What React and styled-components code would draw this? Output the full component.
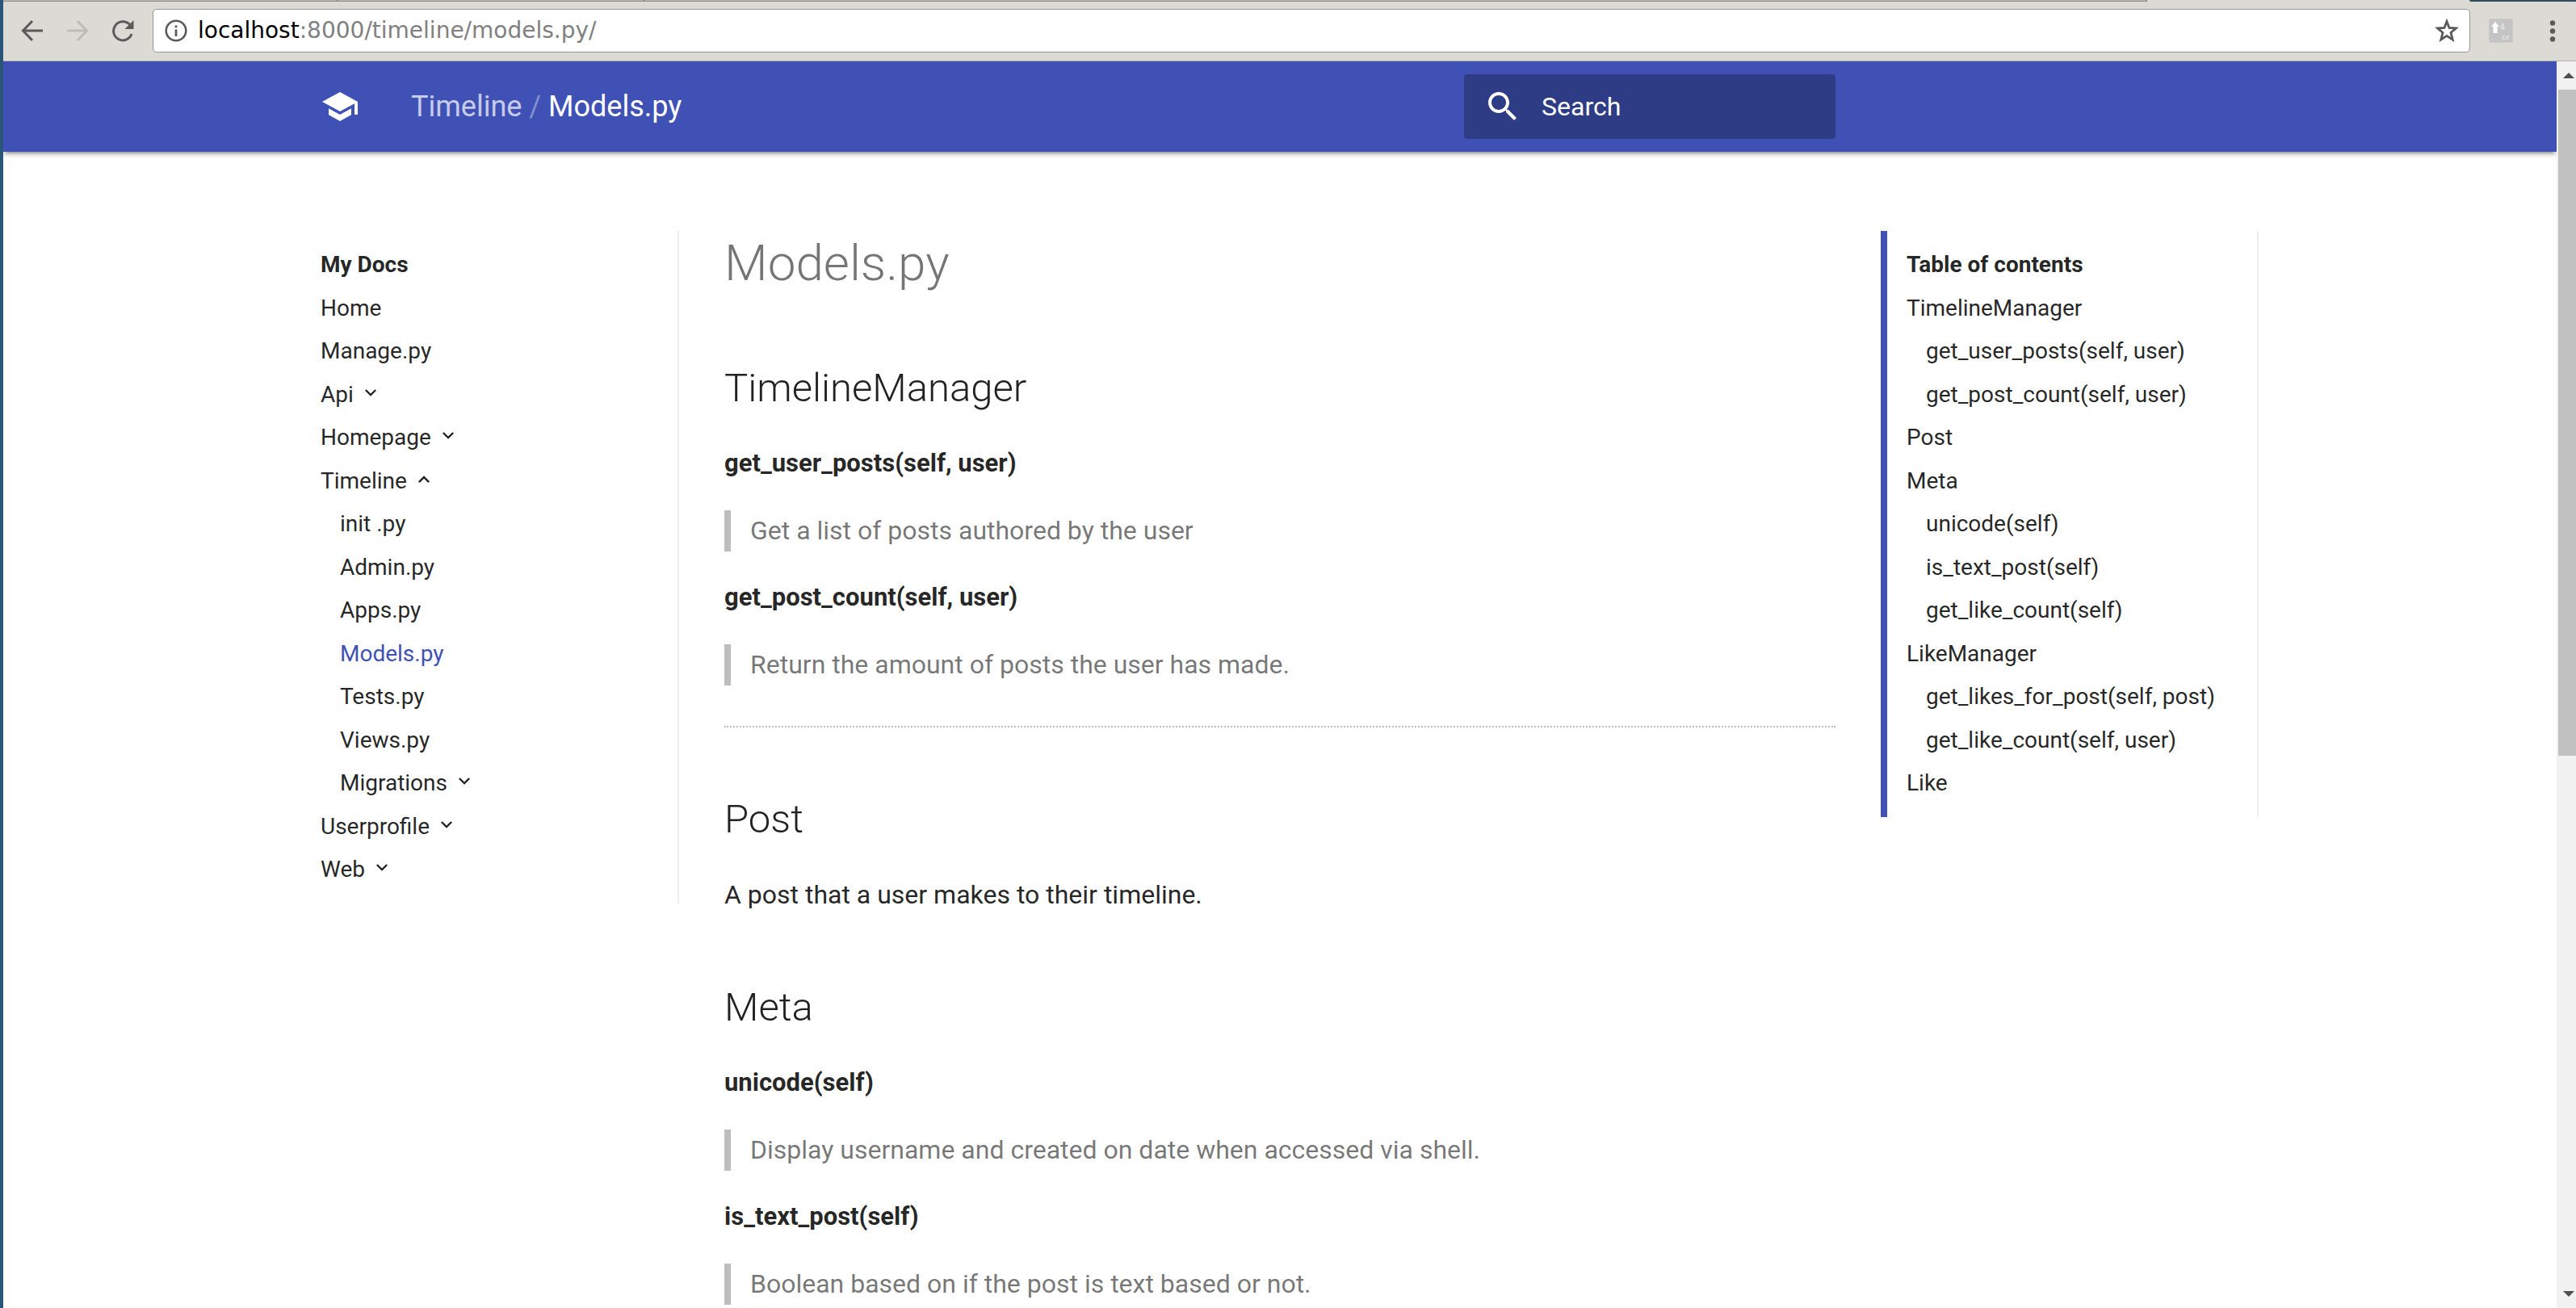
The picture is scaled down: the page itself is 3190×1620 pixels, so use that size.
import React from "react";
import styled, { createGlobalStyle } from "styled-components";

const INDIGO = "#3f51b5";

const GlobalStyle = createGlobalStyle`
  *, *::before, *::after { box-sizing: border-box; }
  body {
    margin: 0;
    background: #fff;
    color: rgba(0, 0, 0, 0.87);
    font-family: Roboto, "Liberation Sans", sans-serif;
    font-size: 32px;
  }
  ul { list-style: none; margin: 0; padding: 0; }
  a { color: inherit; text-decoration: none; }
`;

const Window = styled.div`
  display: flex;
  flex-direction: column;
  height: 100vh;
  overflow: hidden;
  border-left: 4px solid #2a5478;
`;

const TabStrip = styled.div`
  display: flex;
  flex: none;
  height: 3px;
  background: #dbdad4;
`;

const Tab = styled.div`
  flex: ${(p) => p.$grow};
  height: 2px;
  background: #bdbcb5;
  border-bottom: 1px solid #8b8a85;
  border-right: 2px solid #8b8a85;
`;

const ActiveTab = styled.div`
  flex: 400;
`;

const Desktop = styled.div`
  flex: 132;
  height: 2px;
  background: #34536b;
  border-bottom: 1px solid #26404f;
  border-bottom-left-radius: 2px;
`;

const Toolbar = styled.div`
  display: flex;
  flex: none;
  align-items: center;
  height: 73px;
  padding: 0 13px 2px 16px;
  background: #dbdad4;
  border-bottom: 1px solid #b1b0ab;
`;

const ToolButton = styled.button`
  display: flex;
  align-items: center;
  justify-content: center;
  width: 40px;
  height: 40px;
  margin-right: 16px;
  padding: 0;
  border: 0;
  background: none;
  color: ${(p) => (p.disabled ? "#bdbcb8" : "#5a5a5a")};
`;

const AddressBar = styled.div`
  display: flex;
  flex: 1;
  align-items: center;
  height: 54px;
  margin-left: 1px;
  padding: 0 12px 0 14px;
  background: #fff;
  border: 1px solid #969690;
  border-radius: 5px;
  color: #5a5a5a;
`;

const Url = styled.a`
  flex: 1;
  margin-left: 13px;
  font-family: "DejaVu Sans", sans-serif;
  font-size: 28px;
  line-height: 32px;
  color: #808080;
`;

const Host = styled.span`
  color: #000;
`;

const StarButton = styled(ToolButton)`
  width: 32px;
  margin: 0;
`;

const Extension = styled(ToolButton)`
  width: 32px;
  margin: 0 32px 0 22px;
`;

const MenuButton = styled(ToolButton)`
  width: 32px;
  margin: 0;
`;

const Viewport = styled.div`
  display: flex;
  flex: 1;
  min-height: 0;
`;

const Page = styled.div`
  flex: 1;
  min-width: 0;
  overflow: hidden;
`;

const Header = styled.header`
  background: ${INDIGO};
  color: #fff;
  box-shadow: 0 4px 4px rgba(0, 0, 0, 0.14), 0 2px 10px rgba(0, 0, 0, 0.12),
    0 6px 2px -4px rgba(0, 0, 0, 0.2);
`;

const HeaderInner = styled.div`
  display: flex;
  align-items: center;
  justify-content: space-between;
  max-width: 2440px;
  height: 112px;
  margin: 0 auto;
  padding: 0 532px 0 32px;
`;

const Brand = styled.div`
  display: flex;
  align-items: center;
  gap: 64px;
`;

const LogoLink = styled.a`
  display: flex;
`;

const Crumbs = styled.nav`
  font-size: 36px;
  line-height: 48px;
  white-space: pre;
`;

const Parent = styled.a`
  opacity: 0.7;
`;

const Slash = styled.span`
  opacity: 0.35;
`;

const SearchBox = styled.label`
  display: flex;
  align-items: center;
  gap: 24px;
  width: 460px;
  height: 80px;
  padding: 0 24px;
  background: rgba(0, 0, 0, 0.26);
  border-radius: 4px;
`;

const SearchInput = styled.input`
  flex: 1;
  min-width: 0;
  padding: 0;
  border: 0;
  outline: 0;
  background: none;
  color: #fff;
  font: inherit;
  &::placeholder { color: #fff; opacity: 1; }
`;

const Main = styled.main`
  display: grid;
  grid-template-columns: 444px minmax(0, 1fr) 468px;
  align-items: start;
  column-gap: 56px;
  max-width: 2440px;
  margin: 0 auto;
  padding: 98px 8px 0 32px;
`;

const Sidebar = styled.nav`
  padding: 24px 0;
  border-right: 2px solid #eee;
  font-size: 28px;
  line-height: 36px;
`;

const TocPanel = styled(Sidebar)`
  padding-left: 24px;
  border-left: 8px solid ${INDIGO};
`;

const Item = styled.li`
  padding-left: ${(p) => (p.$level ? 24 : 0)}px;
  font-weight: ${(p) => (p.$title ? 700 : 400)};
  &:nth-child(even) { padding-top: 18px; }
  &:nth-child(odd) { padding-top: 17px; }
  &:first-child { padding-top: 0; }
`;

const ItemLink = styled.a`
  display: flex;
  gap: 7px;
  color: ${(p) => (p.$active ? INDIGO : "inherit")};
`;

const Chevron = styled.svg`
  width: 28px;
  height: 28px;
  margin-top: 2px;
  fill: currentColor;
`;

const Title = styled.h1`
  margin: 0 0 80px;
  font-size: 62px;
  font-weight: 300;
  line-height: 80px;
  color: rgba(0, 0, 0, 0.54);
`;

const SectionTitle = styled.h2`
  margin: 79px 0 33px;
  font-size: 49px;
  font-weight: 300;
  line-height: 70px;
`;

const Method = styled.h3`
  margin: 34px 0 36px;
  font-size: 31px;
  font-weight: 700;
  line-height: 45px;
  ${SectionTitle} + & { margin-top: 35px; }
`;

const Text = styled.p`
  margin: 0;
  line-height: 51px;
`;

const Quote = styled.blockquote`
  margin: 0;
  padding-left: 24px;
  border-left: 8px solid rgba(0, 0, 0, 0.26);
  color: rgba(0, 0, 0, 0.54);
  line-height: 51px;
`;

const Rule = styled.hr`
  margin: 50px 0 0;
  border: 0;
  border-top: 2px dotted rgba(0, 0, 0, 0.26);
`;

const Scrollbar = styled.div`
  display: flex;
  flex: none;
  flex-direction: column;
  align-items: flex-end;
  width: 24px;
  background: #f1f1f1;
`;

const Arrow = styled.button`
  display: flex;
  flex: none;
  align-items: center;
  justify-content: center;
  width: 22px;
  height: 35px;
  padding: 0 0 0 4px;
  border: 0;
  background: none;
`;

const Track = styled.div`
  flex: 1;
  width: 22px;
`;

const Thumb = styled.div`
  height: 56%;
  background: #c1c1c1;
`;

const NAV = [
  { label: "Home" },
  { label: "Manage.py" },
  { label: "Api", chevron: "down" },
  { label: "Homepage", chevron: "down" },
  { label: "Timeline", chevron: "up" },
  { label: "init .py", level: 1 },
  { label: "Admin.py", level: 1 },
  { label: "Apps.py", level: 1 },
  { label: "Models.py", level: 1, active: true },
  { label: "Tests.py", level: 1 },
  { label: "Views.py", level: 1 },
  { label: "Migrations", level: 1, chevron: "down" },
  { label: "Userprofile", chevron: "down" },
  { label: "Web", chevron: "down" },
];

const TOC = [
  { label: "TimelineManager" },
  { label: "get_user_posts(self, user)", level: 1 },
  { label: "get_post_count(self, user)", level: 1 },
  { label: "Post" },
  { label: "Meta" },
  { label: "unicode(self)", level: 1 },
  { label: "is_text_post(self)", level: 1 },
  { label: "get_like_count(self)", level: 1 },
  { label: "LikeManager" },
  { label: "get_likes_for_post(self, post)", level: 1 },
  { label: "get_like_count(self, user)", level: 1 },
  { label: "Like" },
];

const CHEVRONS = {
  down: "M7.41 7.84L12 12.42l4.59-4.58L18 9.25l-6 6-6-6z",
  up: "M7.41 15.41L12 10.83l4.59 4.58L18 14l-6-6-6 6z",
};

function LinkList({ title, items }) {
  return (
    <ul>
      <Item $title>{title}</Item>
      {items.map((item, i) => (
        <Item key={i} $level={item.level}>
          <ItemLink href="#" $active={item.active}>
            {item.label}
            {item.chevron && (
              <Chevron viewBox="0 0 24 24" aria-hidden="true">
                <path d={CHEVRONS[item.chevron]} />
              </Chevron>
            )}
          </ItemLink>
        </Item>
      ))}
    </ul>
  );
}

function BrowserBar() {
  return (
    <Toolbar>
      <ToolButton aria-label="Back">
        <svg width="28" height="28" viewBox="0 0 28 28" fill="none" stroke="currentColor" strokeWidth="3">
          <path d="M27 14H3M14 2L2.500 14L14 26" />
        </svg>
      </ToolButton>
      <ToolButton aria-label="Forward" disabled>
        <svg width="28" height="28" viewBox="0 0 28 28" fill="none" stroke="currentColor" strokeWidth="3">
          <path d="M1 14H25M14 2L25.500 14L14 26" />
        </svg>
      </ToolButton>
      <ToolButton aria-label="Reload">
        <svg width="28" height="28" viewBox="0 0 28 28">
          <path d="M22.500 6.500A11.500 11.500 0 1 0 25 18" fill="none" stroke="currentColor" strokeWidth="3" />
          <path d="M27.500 1V12H16.500z" fill="currentColor" />
        </svg>
      </ToolButton>
      <AddressBar>
        <svg width="28" height="28" viewBox="0 0 28 28" fill="none" stroke="currentColor">
          <circle cx="14" cy="14" r="12.300" strokeWidth="2.600" />
          <path d="M14 12.500V21M14 7.500V10.300" strokeWidth="2.800" />
        </svg>
        <Url href="#">
          <Host>localhost</Host>:8000/timeline/models.py/
        </Url>
        <StarButton aria-label="Bookmark this page">
          <svg width="30" height="30" viewBox="0 0 30 30" fill="none" stroke="currentColor" strokeWidth="2.800">
            <path d="M15 3.500L18 11.500L26.500 12L20 17.500L22.200 26L15 21.300L7.800 26L10 17.500L3.500 12L12 11.500z" />
          </svg>
        </StarButton>
      </AddressBar>
      <Extension aria-label="Extension">
        <svg width="30" height="30" viewBox="0 0 30 30">
          <rect x="0.500" y="0.500" width="29" height="29" rx="1" fill="#c4c4c4" stroke="#cbcbc9" />
          <path d="M8 4L13 10H10.500V18H5.500V10H3z" fill="#fff" />
          <path d="M17.300 14.500L13.500 10H15.700V6H18.800V10H21z" fill="#dcdcdc" />
          <text x="16" y="26" fontFamily="Roboto, sans-serif" fontSize="8" fill="#ececec">EX</text>
        </svg>
      </Extension>
      <MenuButton aria-label="Menu">
        <svg width="28" height="28" viewBox="0 0 28 28" fill="currentColor">
          <circle cx="14" cy="4.500" r="3.200" />
          <circle cx="14" cy="14.500" r="3.200" />
          <circle cx="14" cy="24.500" r="3.200" />
        </svg>
      </MenuButton>
    </Toolbar>
  );
}

export default function App() {
  return (
    <Window>
      <GlobalStyle />
      <TabStrip>
        <Tab $grow={414} />
        <Tab $grow={377} />
        <Tab $grow={1862} />
        <ActiveTab />
        <Desktop />
      </TabStrip>
      <BrowserBar />
      <Viewport>
        <Page>
          <Header>
            <HeaderInner>
              <Brand>
                <LogoLink href="#" aria-label="My Docs">
                  <svg width="48" height="48" viewBox="0 0 24 24" fill="#fff">
                    <path d="M5 13.180v4L12 21l7-3.820v-4L12 17l-7-3.820zM12 3L1 9l11 6 9-4.910V17h2V9L12 3z" />
                  </svg>
                </LogoLink>
                <Crumbs aria-label="Breadcrumb">
                  <Parent href="#">Timeline</Parent>
                  <Slash> / </Slash>
                  <span>Models.py</span>
                </Crumbs>
              </Brand>
              <SearchBox>
                <svg width="48" height="48" viewBox="0 0 24 24" fill="#fff" aria-hidden="true">
                  <path d="M15.500 14h-.790l-.280-.270C15.410 12.590 16 11.110 16 9.500 16 5.910 13.090 3 9.500 3S3 5.910 3 9.500 5.910 16 9.500 16c1.610 0 3.090-.590 4.230-1.570l.270.280v.790l5 4.990L20.490 19l-4.990-5zm-6 0C7.010 14 5 11.990 5 9.500S7.010 5 9.500 5 14 7.010 14 9.500 11.990 14 9.500 14z" />
                </svg>
                <SearchInput type="text" placeholder="Search" aria-label="Search" />
              </SearchBox>
            </HeaderInner>
          </Header>
          <Main>
            <Sidebar aria-label="My Docs">
              <LinkList title="My Docs" items={NAV} />
            </Sidebar>
            <article>
              <Title>Models.py</Title>
              <SectionTitle>TimelineManager</SectionTitle>
              <Method>get_user_posts(self, user)</Method>
              <Quote>Get a list of posts authored by the user</Quote>
              <Method>get_post_count(self, user)</Method>
              <Quote>Return the amount of posts the user has made.</Quote>
              <Rule />
              <SectionTitle>Post</SectionTitle>
              <Text>A post that a user makes to their timeline.</Text>
              <SectionTitle>Meta</SectionTitle>
              <Method>unicode(self)</Method>
              <Quote>Display username and created on date when accessed via shell.</Quote>
              <Method>is_text_post(self)</Method>
              <Quote>Boolean based on if the post is text based or not.</Quote>
            </article>
            <TocPanel aria-label="Table of contents">
              <LinkList title="Table of contents" items={TOC} />
            </TocPanel>
          </Main>
        </Page>
        <Scrollbar>
          <Arrow aria-label="Scroll up">
            <svg width="14" height="7" viewBox="0 0 14 7" fill="#505050"><path d="M7 0L14 7H0z" /></svg>
          </Arrow>
          <Track>
            <Thumb />
          </Track>
          <Arrow aria-label="Scroll down">
            <svg width="14" height="7" viewBox="0 0 14 7" fill="#505050"><path d="M7 7L0 0H14z" /></svg>
          </Arrow>
        </Scrollbar>
      </Viewport>
    </Window>
  );
}
